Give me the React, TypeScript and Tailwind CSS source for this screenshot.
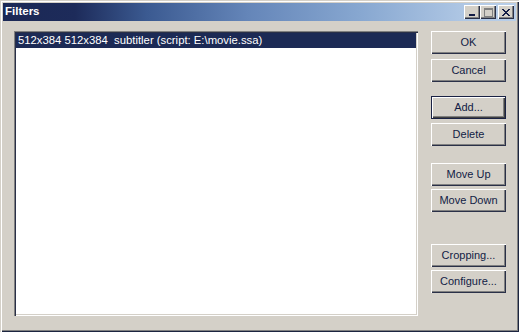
import React from 'react';

type BtnProps = { label: string; top: string; isDefault?: boolean };

const Button: React.FC<BtnProps> = ({ label, top, isDefault }) => (
  <div
    className={`${top} flex h-[23px] w-[75px] items-center justify-center bg-[#d4d0c8] text-[11px] leading-none text-[#121c45] ${
      isDefault
        ? 'shadow-[inset_0_0_0_1px_#1a2244,inset_2px_2px_#fff,inset_-2px_-2px_#404040,inset_-3px_-3px_#808080]'
        : 'shadow-[inset_1px_1px_#fff,inset_-1px_-1px_#2a3048,inset_-2px_-2px_#808080]'
    }`}
  >
    {label}
  </div>
);

const CaptionButton: React.FC<{ children: React.ReactNode }> = ({ children }) => (
  <div className="flex h-[14px] w-[16px] items-center justify-center bg-[#d4d0c8] shadow-[inset_1px_1px_#fff,inset_-1px_-1px_#2a3048,inset_-2px_-2px_#808080]">
    {children}
  </div>
);

const App: React.FC = () => {
  return (
    <div
      className="flex h-[332px] w-[519px] flex-col bg-[#d4d0c8] p-[3px] shadow-[inset_1px_1px_#d4d0c8,inset_2px_2px_#fff,inset_-1px_-1px_#1c2540,inset_-2px_-2px_#808080]"
      style={{ fontFamily: '"Liberation Sans", Arial, sans-serif' }}
    >
      {/* title bar */}
      <div className="flex h-[18px] items-center bg-[linear-gradient(to_right,#1b2855_0%,#1d2b5a_14%,#3b5a91_28%,#6586b9_48%,#88a8d1_70%,#b3cae6_92%,#b8cee8_100%)] pl-[2px] pr-[2px]">
        <span className="text-[11.5px] font-bold text-white">Filters</span>
        <div className="ml-auto flex items-center">
          <CaptionButton>
            <div className="mt-[6px] ml-[-1px] h-[2px] w-[6px] bg-[#121c45]" />
          </CaptionButton>
          <CaptionButton>
            <div className="h-[9px] w-[9px] border border-t-2 border-[#808080]" />
          </CaptionButton>
          <div className="ml-[2px]">
            <CaptionButton>
              <svg width="8" height="7" viewBox="0 0 8 7">
                <path d="M0 0h2v1h1v1h2V1h1V0h2v1H7v1H6v1H5v1h1v1h1v1h1v1H6V6H5V5H3v1H2v1H0V6h1V5h1V4h1V3H2V2H1V1H0z" fill="#121c45" />
              </svg>
            </CaptionButton>
          </div>
        </div>
      </div>

      {/* body */}
      <div className="flex flex-1 pl-[11px] pt-[10px]">
        <div className="h-[285px] w-[404px] bg-white p-[2px] shadow-[inset_1px_1px_#808080,inset_2px_2px_#2a3048,inset_-1px_-1px_#fff,inset_-2px_-2px_#d4d0c8]">
          <div className="flex h-[15px] items-center bg-[#1c2a55] pl-[2px] text-[11.3px] leading-none whitespace-pre text-white">
            512x384 512x384  subtitler (script: E:\movie.ssa)
          </div>
        </div>

        <div className="ml-[13px] flex flex-col">
          <Button label="OK" top="" />
          <Button label="Cancel" top="mt-[5px]" />
          <Button label="Add..." top="mt-[14px]" isDefault />
          <Button label="Delete" top="mt-[4px]" />
          <Button label="Move Up" top="mt-[17px]" />
          <Button label="Move Down" top="mt-[3px]" />
          <Button label="Cropping..." top="mt-[32px]" />
          <Button label="Configure..." top="mt-[3px]" />
        </div>
      </div>
    </div>
  );
};

export default App;
